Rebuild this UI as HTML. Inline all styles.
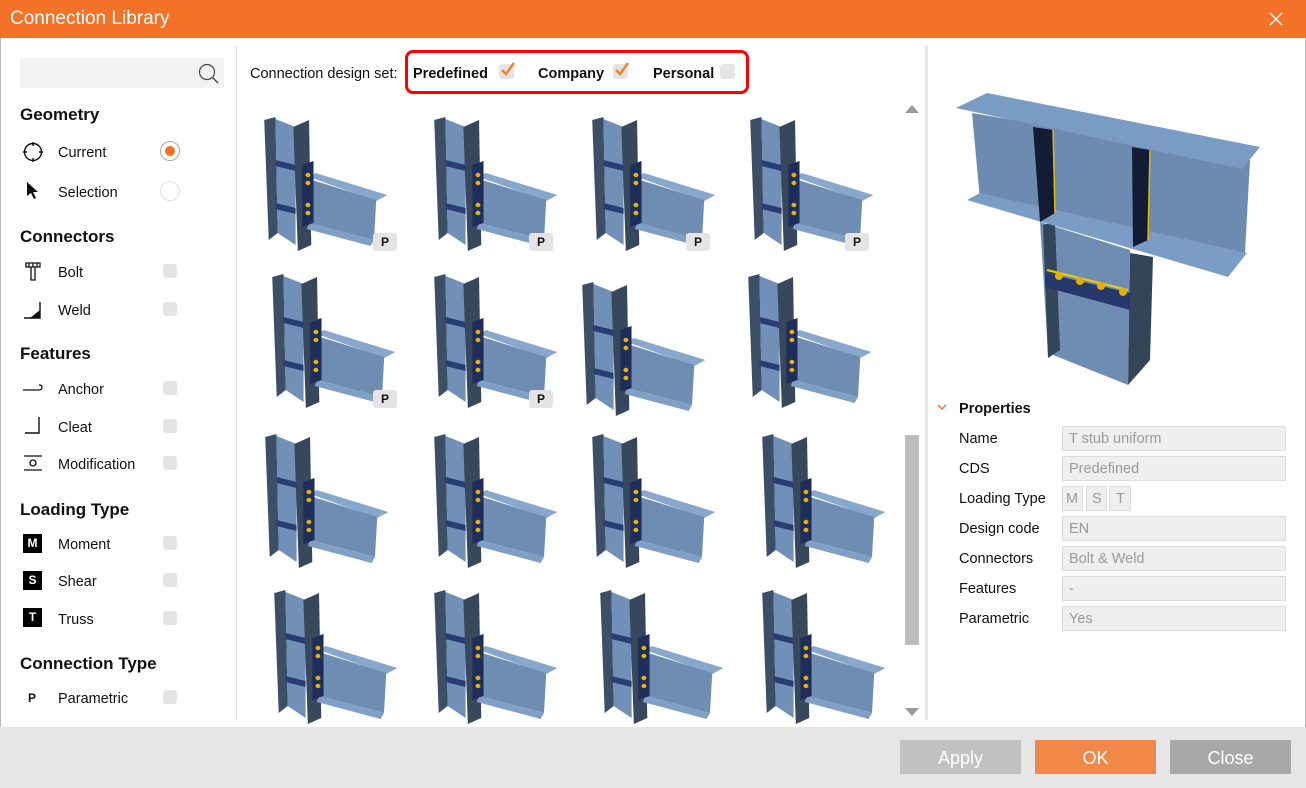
<!DOCTYPE html>
<html><head><meta charset="utf-8"><style>
*{margin:0;padding:0;box-sizing:border-box}
body{width:1306px;height:788px;position:relative;background:#fff;font-family:"Segoe UI","Liberation Sans",sans-serif;color:#111;overflow:hidden}
.abs{position:absolute}
.title{left:0;top:0;width:1306px;height:38px;background:#f37227}
.title span{position:absolute;left:10px;top:8px;color:#fff;font-size:19px}
.h{position:absolute;left:20px;font-weight:bold;font-size:17px;padding-top:3px}
.it{position:absolute;left:58px;font-size:14.5px;padding-top:3px}
.cb{position:absolute;left:163px;width:14px;height:14px;background:#e4e4e4;border-radius:3px}
.lbl{position:absolute;left:959px;font-size:14.5px;padding-top:3px}
.inp{position:absolute;left:1062px;width:224px;height:25px;background:#efefef;border:1px solid #dcdcdc;color:#9a9a9a;font-size:14.5px;padding:4px 6px 0}
.pb{position:absolute;width:24px;height:18px;background:#e4e4e4;border-radius:3px;font-size:12px;font-weight:bold;text-align:center;line-height:18px}
.btn{position:absolute;top:740px;width:121px;height:34px;color:#fff;font-size:18px;text-align:center;line-height:36px}
.tp{position:absolute;top:66px;font-size:14.5px}
</style></head><body>
<div class="abs title"><span>Connection Library</span>
<svg class="abs" style="left:1269px;top:12px" width="14" height="14"><path d="M1 1L13 13M13 1L1 13" stroke="#fff" stroke-width="1.4"/></svg></div>

<div class="abs" style="left:0;top:38px;width:1px;height:690px;background:#bbb"></div>
<div class="abs" style="left:1305px;top:38px;width:1px;height:690px;background:#bbb"></div>
<div class="abs" style="left:236px;top:46px;width:1px;height:674px;background:#ddd"></div>
<div class="abs" style="left:925px;top:46px;width:3px;height:674px;background:#e6e6e6"></div>

<!-- left panel -->
<div class="abs" style="left:20px;top:58px;width:204px;height:30px;background:#f2f2f2"></div>
<svg class="abs" style="left:197px;top:62px" width="24" height="24"><circle cx="10" cy="10" r="7.5" fill="none" stroke="#444" stroke-width="1.2"/><path d="M15.5 15.5L21 21" stroke="#444" stroke-width="1.3"/></svg>
<div class="h" style="top:102px">Geometry</div>
<svg class="abs" style="left:22px;top:141px" width="22" height="22"><circle cx="11" cy="11" r="8.5" fill="none" stroke="#111" stroke-width="1.4"/><path d="M11 1v4M11 17v4M1 11h4M17 11h4" stroke="#111" stroke-width="1.4"/></svg>
<div class="it" style="top:142px">Current</div>
<div class="abs" style="left:160px;top:141px;width:20px;height:20px;border:1px solid #aaa;border-radius:50%"></div>
<div class="abs" style="left:165px;top:146px;width:10px;height:10px;background:#f37227;border-radius:50%"></div>
<svg class="abs" style="left:26px;top:181px" width="16" height="20"><path d="M1 1L1 15L5 12L8 18L10 17L7 11L12 11Z" fill="#111"/></svg>
<div class="it" style="top:182px">Selection</div>
<div class="abs" style="left:160px;top:181px;width:20px;height:20px;border:1px solid #ddd;border-radius:50%"></div>
<div class="h" style="top:224px">Connectors</div>
<svg class="abs" style="left:24px;top:261px" width="20" height="20"><path d="M2 2h14v4H2zM5 2v4M9 2v4M13 2v4M7 6h4v13H7z" fill="none" stroke="#111" stroke-width="1.3"/></svg>
<div class="it" style="top:262px">Bolt</div><div class="cb" style="top:264px"></div>
<svg class="abs" style="left:22px;top:298px" width="22" height="22"><path d="M2 20L18 20L18 4" fill="none" stroke="#111" stroke-width="1.4"/><path d="M8 20L18 12L18 20Z" fill="#111"/></svg>
<div class="it" style="top:300px">Weld</div><div class="cb" style="top:302px"></div>
<div class="h" style="top:341px">Features</div>
<svg class="abs" style="left:22px;top:380px" width="22" height="16"><path d="M1 10H17Q20 10 20 7Q20 5 17 5" fill="none" stroke="#111" stroke-width="1.3"/></svg>
<div class="it" style="top:379px">Anchor</div><div class="cb" style="top:381px"></div>
<svg class="abs" style="left:24px;top:414px" width="20" height="22"><path d="M1 19H15V3" fill="none" stroke="#111" stroke-width="1.4"/></svg>
<div class="it" style="top:417px">Cleat</div><div class="cb" style="top:419px"></div>
<svg class="abs" style="left:22px;top:454px" width="22" height="18"><path d="M2 2H20M2 16H20" stroke="#111" stroke-width="1.3"/><circle cx="11" cy="9" r="3" fill="none" stroke="#111" stroke-width="1.3"/></svg>
<div class="it" style="top:454px">Modification</div><div class="cb" style="top:456px"></div>
<div class="h" style="top:497px">Loading Type</div>
<div class="abs" style="left:23px;top:534px;width:19px;height:19px;background:#000;color:#fff;font-size:12px;font-weight:bold;text-align:center;line-height:19px">M</div>
<div class="it" style="top:534px">Moment</div><div class="cb" style="top:536px"></div>
<div class="abs" style="left:23px;top:571px;width:19px;height:19px;background:#000;color:#fff;font-size:12px;font-weight:bold;text-align:center;line-height:19px">S</div>
<div class="it" style="top:571px">Shear</div><div class="cb" style="top:573px"></div>
<div class="abs" style="left:23px;top:608px;width:19px;height:19px;background:#000;color:#fff;font-size:12px;font-weight:bold;text-align:center;line-height:19px">T</div>
<div class="it" style="top:609px">Truss</div><div class="cb" style="top:611px"></div>
<div class="h" style="top:651px">Connection Type</div>
<div class="abs" style="left:28px;top:691px;font-size:12px;font-weight:bold">P</div>
<div class="it" style="top:688px">Parametric</div><div class="cb" style="top:690px"></div>

<!-- top filter -->
<div class="tp" style="left:250px">Connection design set:</div>
<div class="abs" style="left:405px;top:50px;width:344px;height:44px;border:3px solid #f00;border-radius:8px"></div>
<div class="tp" style="left:413px;font-weight:bold">Predefined</div>
<div class="abs" style="left:499px;top:64px;width:15px;height:15px;background:#e4e4e4;border-radius:3px"></div>
<svg class="abs" style="left:499px;top:60px" width="18" height="18"><path d="M3 10L7 14L15 3" fill="none" stroke="#f58220" stroke-width="2.4"/></svg>
<div class="tp" style="left:538px;font-weight:bold">Company</div>
<div class="abs" style="left:613px;top:64px;width:15px;height:15px;background:#e4e4e4;border-radius:3px"></div>
<svg class="abs" style="left:613px;top:60px" width="18" height="18"><path d="M3 10L7 14L15 3" fill="none" stroke="#f58220" stroke-width="2.4"/></svg>
<div class="tp" style="left:653px;font-weight:bold">Personal</div>
<div class="abs" style="left:720px;top:64px;width:15px;height:15px;background:#e4e4e4;border-radius:3px"></div>

<!-- thumbnails -->
<svg class="abs" style="left:0;top:0" width="1306" height="788">
<defs>
<g id="cn" transform="scale(1.12,1.0)">
<polygon points="2,5 12,2 14,118 6,125" fill="#3d4f66"/>
<polygon points="12,4 30,12 30,130 14,118" fill="#7090b7"/>
<polygon points="28,12 42,5 44,130 32,136" fill="#37485d"/>
<polygon points="12,45 30,50 30,56 12,51" fill="#2a3c74"/>
<polygon points="12,88 30,93 30,99 12,94" fill="#2a3c74"/>
<polygon points="42,62 48,58 112,80 102,86" fill="#88a7cd"/>
<polygon points="42,64 102,85 100,125 42,108" fill="#6f8db3"/>
<polygon points="42,108 100,125 97,131 40,114" fill="#7f9fc5"/>
<polygon points="36,50 46,46 46,108 36,112" fill="#1f2d5a"/>
<g fill="#e8b400"><circle cx="41" cy="60" r="2.2"/><circle cx="41" cy="68" r="2.2"/><circle cx="41" cy="90" r="2.2"/><circle cx="41" cy="98" r="2.2"/></g>
</g>
</defs>
<use href="#cn" x="262" y="115"/><use href="#cn" x="432" y="115"/><use href="#cn" x="590" y="115"/><use href="#cn" x="748" y="115"/>
<use href="#cn" x="270" y="272"/><use href="#cn" x="432" y="272"/><use href="#cn" x="580" y="280"/><use href="#cn" x="746" y="272"/>
<use href="#cn" x="263" y="432"/><use href="#cn" x="432" y="432"/><use href="#cn" x="590" y="432"/><use href="#cn" x="760" y="432"/>
<use href="#cn" x="272" y="588"/><use href="#cn" x="432" y="588"/><use href="#cn" x="598" y="588"/><use href="#cn" x="760" y="588"/>

<!-- big preview -->
<polygon points="1040,222 1130,250 1128,385 1048,353" fill="#6f8db3"/>
<polygon points="1043,225 1055,222 1060,350 1048,358" fill="#34455a"/>
<polygon points="1130,253 1153,257 1150,360 1128,385" fill="#34455a"/>
<polygon points="972,113 1250,160 1245,253 980,200" fill="#6d8bb1"/>
<polygon points="967,200 980,193 1247,253 1228,277" fill="#7b9cc4"/>
<polygon points="956,108 987,93 1260,147 1242,169" fill="#7a9bc4"/>
<polygon points="1033,127 1053,130 1055,213 1040,222" fill="#131b35"/>
<polygon points="1132,147 1150,150 1148,240 1133,247" fill="#131b35"/>
<path d="M1053 130L1055 213M1150 150L1148 240" stroke="#e5b700" stroke-width="1.5"/>
<polygon points="1045,273 1130,293 1130,310 1045,287" fill="#26376b"/>
<path d="M1047 270L1128 290" stroke="#f2d000" stroke-width="2"/>
<g fill="#e3b000"><circle cx="1059" cy="276" r="4"/><circle cx="1080" cy="281" r="4"/><circle cx="1101" cy="286" r="4"/><circle cx="1123" cy="292" r="4"/></g>

<!-- scrollbar -->
<path d="M905 113L912 105L919 113Z" fill="#999"/>
<rect x="905" y="435" width="14" height="210" fill="#bdbdbd"/>
<path d="M905 708L912 716L919 708Z" fill="#999"/>
<path d="M938 405L942 409L946 405" fill="none" stroke="#f37227" stroke-width="1.5"/>
</svg>
<div class="pb" style="left:373px;top:233px">P</div>
<div class="pb" style="left:529px;top:233px">P</div>
<div class="pb" style="left:686px;top:233px">P</div>
<div class="pb" style="left:845px;top:233px">P</div>
<div class="pb" style="left:373px;top:390px">P</div>
<div class="pb" style="left:529px;top:390px">P</div>

<!-- properties -->
<div class="abs" style="left:959px;top:401px;font-size:14.5px;font-weight:bold">Properties</div>
<div class="lbl" style="top:428px">Name</div><div class="inp" style="top:426px">T stub uniform</div>
<div class="lbl" style="top:458px">CDS</div><div class="inp" style="top:456px">Predefined</div>
<div class="lbl" style="top:488px">Loading Type</div>
<div class="inp" style="top:486px;width:21px;padding:4px 3px 0">M</div>
<div class="inp" style="top:486px;left:1086px;width:21px;padding:4px 5px 0">S</div>
<div class="inp" style="top:486px;left:1109px;width:22px;padding:4px 6px 0">T</div>
<div class="lbl" style="top:518px">Design code</div><div class="inp" style="top:516px">EN</div>
<div class="lbl" style="top:548px">Connectors</div><div class="inp" style="top:546px">Bolt &amp; Weld</div>
<div class="lbl" style="top:578px">Features</div><div class="inp" style="top:576px">-</div>
<div class="lbl" style="top:608px">Parametric</div><div class="inp" style="top:606px">Yes</div>

<!-- footer -->
<div class="abs" style="left:0;top:727px;width:1306px;height:61px;background:#e6e6e6"></div>
<div class="btn" style="left:900px;background:#c2c2c2">Apply</div>
<div class="btn" style="left:1035px;background:#f0884a">OK</div>
<div class="btn" style="left:1170px;background:#a8a8a8">Close</div>
</body></html>
